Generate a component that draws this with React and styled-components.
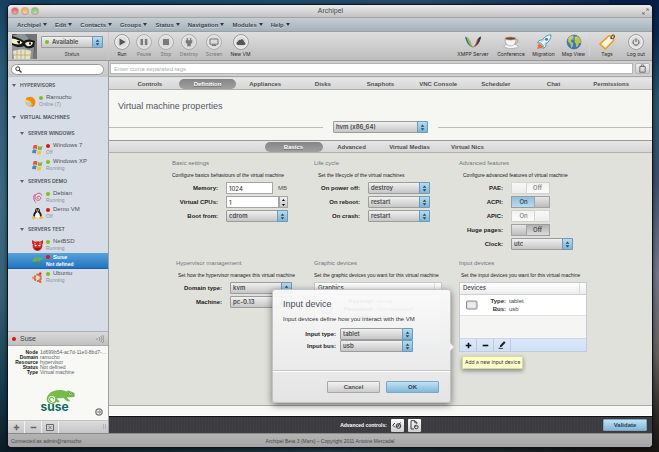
import React from "react";
import styled, { createGlobalStyle, css } from "styled-components";

const sans = `"Liberation Sans", Arial, sans-serif`;
const small = `Inter, "Liberation Sans", sans-serif`;

const GlobalStyle = createGlobalStyle`
  *, *::before, *::after { box-sizing: border-box; }
  html, body, #root { height: 100%; }
  body { margin: 0; overflow: hidden; font-family: ${sans}; font-size: 6px; line-height: 8px; color: #333; }
  button, input, select { font: inherit; color: inherit; margin: 0; padding: 0; border: 0; background: none; }
  button { cursor: pointer; }
  h1, h2, h3, p, dl, dd, dt, ul { margin: 0; padding: 0; font: inherit; }
  ul { list-style: none; }
  svg { display: block; flex: none; }
`;

const Desktop = styled.div`
  height: 100vh;
  padding: 5px 7px 5px 8px;
  background:
    linear-gradient(180deg, #071f48 0%, #0b2a50 8%, #2a566c 22%, #3d4f6c 40%, #74778a 60%, #67625f 78%, #2e2925 92%, #181512 100%) right / 50px 100% no-repeat,
    linear-gradient(180deg, #16405f 0%, #2a5a76 15%, #3a6a80 45%, #356073 65%, #183c50 85%, #0c1c26 100%) left / 50px 100% no-repeat,
    linear-gradient(90deg, #16405f, #1e4a6a 40%, #274a66 65%, #071f48) top / 100% 20px no-repeat,
    linear-gradient(90deg, #0c1c26, #1f3a44 50%, #181512);
`;

const Window = styled.div`
  height: 100%;
  display: flex;
  flex-direction: column;
  border-radius: 4px;
  overflow: hidden;
  background: #e3e3df;
  box-shadow: 0 0 0 1px #0c1420, 0 1px 4px 1px rgba(0, 0, 0, 0.6);
`;

const TitleBar = styled.header`
  flex: none;
  height: 13px;
  display: grid;
  grid-template-columns: 1fr auto 1fr;
  align-items: center;
  padding: 0 3px 0 4px;
  background: linear-gradient(#ececec, #c2c2c2);
  border-bottom: 1px solid #a5a5a5;
  color: #4a4a4a;
  font-size: 7px;
`;

const Lights = styled.div`
  display: flex;
  gap: 4px;
`;

const Light = styled.button`
  width: 6px;
  height: 6px;
  border-radius: 50%;
  background: radial-gradient(circle at 50% 75%, #fff6 10%, ${(p) => p.$color} 70%);
  background-color: ${(p) => p.$color};
  box-shadow: 0 0 0 1px rgba(90, 60, 50, 0.25);
`;

const Expand = styled.button`
  justify-self: end;
`;

const MenuBar = styled.nav`
  flex: none;
  height: 14px;
  display: flex;
  align-items: center;
  gap: 8px;
  padding: 0 9px;
  background: linear-gradient(#c3cdd4, #a6b2ba);
  border-bottom: 1px solid #97a1a8;
`;

const MenuButton = styled.button`
  display: flex;
  align-items: center;
  gap: 2px;
  font-weight: bold;
  color: #3e474d;
  text-shadow: 0 1px 0 rgba(255, 255, 255, 0.5);
`;

const Caret = styled.span`
  border: 2px solid transparent;
  border-top: 3px solid #30383d;
  border-bottom: 0;
`;

const Toolbar = styled.div`
  flex: none;
  height: 29px;
  display: flex;
  align-items: stretch;
  background: linear-gradient(#dedede, #bdbdbd);
  border-bottom: 1px solid #9a9a9a;
`;

const Identity = styled.div`
  width: 101px;
  display: flex;
  gap: 4px;
  padding: 2px 5px 0 4px;
  border-right: 1px solid #c9c9c9;
`;

const StatusBox = styled.div`
  flex: 1;
  display: flex;
  flex-direction: column;
  padding-top: 2px;
  gap: 3px;
  text-align: center;
  font: 5px/6px ${small};
  color: #444;
`;

const Tools = styled.div`
  display: flex;
  padding: 2px 0 0 2px;
`;

const RightTools = styled(Tools)`
  margin-left: auto;
  padding-right: 2px;
`;

const Tool = styled.button`
  width: ${(p) => p.$w || 22}px;
  display: flex;
  flex-direction: column;
  align-items: center;
  justify-content: flex-start;
  gap: 1px;
  font: 5px/6px ${small};
  white-space: nowrap;
  color: ${(p) => (p.disabled ? "#777" : "#2b2b2b")};
  svg { opacity: ${(p) => (p.disabled ? 0.7 : 1)}; }
`;

const ToolRule = styled.span`
  width: 1px;
  margin: 0 2px 4px 0;
  background: #d4d4d4;
`;

const Body = styled.div`
  flex: 1;
  min-height: 0;
  display: flex;
`;

const Sidebar = styled.aside`
  flex: none;
  width: 101px;
  display: flex;
  flex-direction: column;
  border-right: 1px solid #9f9fa3;
  background: #d7dde6;
`;

const SearchRow = styled.div`
  flex: none;
  height: 16px;
  padding: 3px 4px 0 3px;
  background: linear-gradient(#d6d6d6, #c6c6c6);
`;

const SearchField = styled.label`
  display: flex;
  align-items: center;
  height: 11px;
  padding-left: 3px;
  border: 1px solid #9b9b9b;
  border-radius: 6px;
  background: #fff;
  input { flex: 1; min-width: 0; outline: 0; }
`;

const Tree = styled.ul`
  flex: 1;
  min-height: 0;
  overflow: hidden;
  color: #4b5158;
`;

const Group = styled.li`
  height: 16px;
  display: flex;
  align-items: center;
  gap: 4px;
  padding-left: ${(p) => (p.$nested ? 12 : 4)}px;
  font: 600 5px/16px ${small};
  color: #4a5057;
`;

const Contact = styled.li`
  height: 16px;
  display: flex;
  align-items: center;
  gap: 3px;
  padding-left: ${(p) => (p.$nested ? 24 : 17)}px;
  ${(p) =>
    p.$selected &&
    css`
      background: linear-gradient(#55a2dc, #2273c0);
      border-bottom: 1px solid #1d5f9f;
      color: #fff;
      font-weight: bold;
    `}
`;

const ContactText = styled.div`
  line-height: 7px;
  small {
    display: block;
    font-size: 5px;
    line-height: 7px;
    color: ${(p) => (p.$selected ? "#fff" : "#8a9098")};
  }
`;

const ContactName = styled.span`
  display: flex;
  align-items: center;
  gap: 3px;
`;

const Dot = styled.i`
  flex: none;
  width: 4px;
  height: 4px;
  border-radius: 50%;
  background: ${(p) => (p.$on ? "#7cc116" : "#e01212")};
`;

const Triangle = styled.span`
  border: 2px solid transparent;
  border-top: 3px solid #5f656c;
  border-bottom: 0;
`;

const DetailHead = styled.div`
  flex: none;
  height: 15px;
  display: flex;
  align-items: center;
  gap: 4px;
  padding: 0 4px;
  font-size: 7px;
  color: #444;
  background: linear-gradient(#dadada, #c0c0c0);
  border-top: 1px solid #b0b0b0;
  border-bottom: 1px solid #aaa;
  svg { margin-left: auto; }
`;

const Detail = styled.section`
  flex: none;
  height: 74px;
  display: flex;
  flex-direction: column;
  justify-content: space-between;
  padding: 4px 5px 4px 4px;
  background: #f8f8f5;
`;

const Facts = styled.dl`
  display: grid;
  grid-template-columns: 26px 1fr;
  column-gap: 2px;
  font-size: 5px;
  line-height: 5px;
  white-space: nowrap;
  dt { text-align: right; font-weight: bold; color: #222; }
  dd { color: #5f6369; }
`;

const LogoRow = styled.div`
  display: grid;
  grid-template-columns: 1fr auto 1fr;
  align-items: end;
  button { justify-self: end; }
`;

const SideActions = styled.div`
  flex: none;
  height: 13px;
  display: flex;
  background: linear-gradient(#dcdcdc, #c6c6c6);
  border-top: 1px solid #c4c4c4;
`;

const SideAction = styled.button`
  width: 17px;
  display: grid;
  place-items: center;
  border-right: 1px solid #f0f0f0;
`;

const Grip = styled.span`
  margin: 3px 2px 0 auto;
  width: 3px;
  height: 5px;
  border: 1px solid #b3b3b3;
  border-width: 0 1px;
`;

const Main = styled.main`
  flex: 1;
  min-width: 0;
  display: flex;
  flex-direction: column;
`;

const TagRow = styled.div`
  flex: none;
  height: 16px;
  display: flex;
  gap: 2px;
  padding: 2px 2px 2px 1px;
  background: #cfcfcf;
  border-bottom: 1px solid #a8a8a8;
  input {
    flex: 1;
    padding: 0 3px;
    background: #fff;
    border: 1px solid #b5b5b5;
    outline: 0;
  }
  input::placeholder { color: #a9b0b7; opacity: 1; }
`;

const TagButton = styled.button`
  width: 15px;
  display: grid;
  place-items: center;
  border: 1px solid #b5b5b5;
  border-radius: 2px;
  background: linear-gradient(#f2f2f2, #cbcbcb);
`;

const Tabs = styled.nav`
  flex: none;
  height: 13px;
  display: grid;
  grid-template-columns: ${(p) => (p.$centered ? "repeat(4, 58px)" : "repeat(9, 1fr)")};
  justify-content: center;
  align-items: center;
  padding: 0 12px;
  background: linear-gradient(#e6e6e6, #d6d6d6);
  border-top: 1px solid ${(p) => (p.$centered ? "#999" : "#ddd")};
  border-bottom: 1px solid #b0b0b0;
`;

const Tab = styled.button`
  height: 10px;
  border-radius: 5px;
  font-weight: bold;
  white-space: nowrap;
  color: #505050;
  ${(p) =>
    p.$active &&
    css`
      background: linear-gradient(#858585, #a0a0a0);
      color: #fff;
      text-shadow: 0 1px 0 #666;
    `}
`;

const PageHead = styled.section`
  flex: none;
  height: 50px;
  padding: 10px 9px 0;
  background: #f6f6f3;
  h1 { font-size: 9px; line-height: 12px; color: #4e5862; }
`;

const TypeRow = styled.div`
  display: flex;
  align-items: center;
  gap: 10px;
  margin: 9px -9px 0;
  &::before, &::after { content: ""; flex: 1; height: 1px; background: #bdbdbb; }
`;

const SelectBox = styled.span`
  position: relative;
  display: block;
  width: ${(p) => (p.$w ? `${p.$w}px` : "100%")};
  height: 12px;
  select {
    appearance: none;
    display: block;
    width: 100%;
    height: 100%;
    padding: 0 12px 0 ${(p) => (p.$dot ? 10 : 2)}px;
    font: 600 6px/8px ${small};
    color: #4a4a4a;
    border: 1px solid #9c9c9c;
    border-radius: 1px;
    background: linear-gradient(#f0f0f0, #c6c6c6);
    outline: 0;
  }
`;

const Cap = styled.span`
  position: absolute;
  top: 0;
  right: 0;
  width: 11px;
  height: 100%;
  display: grid;
  place-items: center;
  border: 1px solid #6f99b5;
  border-radius: 0 1px 1px 0;
  background: linear-gradient(#b5dcf1, #7fb5d6);
  pointer-events: none;
`;

const OverDot = styled(Dot)`
  position: absolute;
  left: 4px;
  top: 4px;
`;

const Workspace = styled.div`
  flex: 1;
  display: grid;
  grid-template-columns: 142fr 145fr 130fr;
  grid-template-rows: 100px auto;
  align-content: start;
  padding: 6px 63px 0;
  background: #e1e1dc;
`;

const Section = styled.section`
  position: relative;
  min-width: 0;
  padding-left: ${(p) => p.$indent || 0}px;
  h2 { color: #70757a; line-height: 8px; white-space: nowrap; }
  > p {
    margin: 4px 0 3px ${(p) => p.$inset || 0}px;
    font: 5px/8px ${sans};
    color: #222;
    white-space: nowrap;
  }
`;

const Fields = styled.div`
  display: grid;
  grid-template-columns: ${(p) => p.$label || 46}px 62px auto;
  grid-auto-rows: 12px;
  gap: 2px 8px;
  align-items: center;
  justify-content: start;
`;

const Label = styled.label`
  grid-column: 1;
  justify-self: end;
  font-weight: bold;
  color: #222;
  white-space: nowrap;
`;

const WithUnit = styled.div`
  display: flex;
  align-items: center;
  gap: 5px;
  color: #555;
  input { width: 47px; }
`;

const TextInput = styled.input`
  && {
    height: 12px;
    padding: 0 2px;
    font: 500 6px/8px ${small};
    color: #444;
    background: #fff;
    border: 1px solid #a5a5a5;
    outline: 0;
  }
`;

const Stepper = styled.div`
  display: flex;
  input { flex: 1; min-width: 0; }
`;

const StepButtons = styled.div`
  width: 9px;
  display: grid;
  border: 1px solid #a5a5a5;
  background: linear-gradient(#f0f0f0, #c4c4c4);
  button { display: grid; place-items: center; }
`;

const Switch = styled.label`
  position: relative;
  display: flex;
  flex-direction: ${(p) => (p.$on ? "row-reverse" : "row")};
  width: 39px;
  height: 12px;
  border: 1px solid ${(p) => (p.$locked ? "#cfcfcd" : "#9c9c9c")};
  background: ${(p) =>
    p.$locked ? "linear-gradient(#f2f2f0, #fbfbfb)" : p.$on ? "linear-gradient(#8fc0dd, #b5dcf1)" : "linear-gradient(#b0b0b0, #dcdcdc)"};
  color: ${(p) => (p.$locked ? "#777" : "#333")};
  input { position: absolute; inset: 0; margin: 0; opacity: 0; }
  span { flex: 1; text-align: center; font: 500 6px/10px ${small}; }
  &::before {
    content: "";
    width: 14px;
    background: ${(p) => (p.$locked ? "linear-gradient(#f8f8f8, #ececea)" : "linear-gradient(#e6e6e6, #bcbcbc)")};
    box-shadow: 0 0 0 1px ${(p) => (p.$locked ? "#d6d6d4" : "#a3a3a3")};
  }
`;

const ListBox = styled.div`
  width: 128px;
  height: 70px;
  margin-top: 1px;
  display: flex;
  flex-direction: column;
  border: 1px solid #c3cbd8;
  background: #f5f5f4;
`;

const ListTable = styled.table`
  width: 100%;
  border-collapse: collapse;
  th {
    height: 11px;
    padding: 0 3px;
    text-align: left;
    font: 500 6px/8px ${small};
    color: #444;
    background: linear-gradient(#fff, #ececec);
    border-bottom: 1px solid #cfcfcf;
  }
  th + th { width: 7px; padding: 0; border-left: 1px solid #ddd; }
  td { height: 21px; padding: 0 5px; background: #fff; border-bottom: 1px solid #e3e3e3; vertical-align: top; }
`;

const DeviceCell = styled.div`
  display: flex;
  align-items: center;
  gap: 8px;
  padding-top: 2px;
`;

const DeviceFacts = styled.dl`
  display: grid;
  grid-template-columns: ${(p) => p.$keys}px auto;
  column-gap: 3px;
  line-height: 8px;
  dt { text-align: right; font-weight: bold; color: #333; }
  dd { color: #444; }
`;

const ListActions = styled.div`
  height: 13px;
  margin-top: auto;
  display: flex;
  background: linear-gradient(#dbe8f8, #cfe1f6);
  border-top: 1px solid #cbd8ea;
`;

const ListAction = styled.button`
  width: 17px;
  display: grid;
  place-items: center;
  border-right: 1px solid #bccbe0;
`;

const Tooltip = styled.div`
  position: absolute;
  top: 97px;
  left: 3px;
  padding: 1px 2px;
  font: 5px/9px ${small};
  color: #333;
  white-space: nowrap;
  background: #ffffc9;
  border: 1px solid #d9d99c;
  box-shadow: 0 2px 4px rgba(0, 0, 0, 0.4);
`;

const Popover = styled.form`
  position: absolute;
  z-index: 2;
  top: 30px;
  right: calc(100% + 8px);
  width: 179px;
  border: 1px solid #c2c2c2;
  border-radius: 3px;
  background: linear-gradient(rgba(250, 250, 250, 0.93), rgba(228, 228, 228, 0.96));
  box-shadow: 0 2px 7px rgba(0, 0, 0, 0.5);
  &::after {
    content: "";
    position: absolute;
    left: 100%;
    top: 53px;
    border: 4px solid transparent;
    border-left-color: #f2f2f2;
    border-right: 0;
  }
  h3 { font-size: 9px; line-height: 12px; color: #4b515b; }
`;

const PopoverBody = styled.div`
  padding: 8px 10px 18px;
  p { margin: 5px 0; white-space: nowrap; color: #333; }
`;

const PopoverFields = styled.div`
  display: grid;
  grid-template-columns: 53px 73px;
  gap: 0 4px;
  align-items: center;
`;

const PopoverButtons = styled.div`
  display: flex;
  justify-content: flex-end;
  gap: 6px;
  padding: 10px 11px 9px;
  border-top: 1px solid #c6c6c6;
  box-shadow: inset 0 1px 0 #fff;
`;

const PushButton = styled.button`
  width: ${(p) => p.$w || 53}px;
  height: 12px;
  font-weight: bold;
  color: ${(p) => (p.$primary ? "#2c4252" : "#505050")};
  border: 1px solid ${(p) => (p.$primary ? "#7fa6bf" : "#a8a8a8")};
  border-radius: 1px;
  background: ${(p) => (p.$primary ? "linear-gradient(#bfe2f5, #82b8d8)" : "linear-gradient(#f2f2f2, #cccccc)")};
`;

const Spacer = styled.div`
  flex: none;
  height: 11px;
  background: #f8f8f5;
  border-top: 1px solid #aaa;
  border-bottom: 1px solid #fff;
`;

const Commands = styled.div`
  flex: none;
  height: 17px;
  display: grid;
  grid-template-columns: 1fr auto 1fr;
  align-items: center;
  padding: 0 5px;
  color: #fff;
  font: bold 5px/8px ${sans};
  background: repeating-linear-gradient(90deg, #ffffff06 0 1px, transparent 1px 3px), #3b3b40;
  border-top: 1px solid #111;
  > ${PushButton} { grid-column: 3; justify-self: end; font: bold 6px/8px ${sans}; }
`;

const Advanced = styled.div`
  grid-column: 2;
  display: flex;
  align-items: center;
  gap: 4px;
`;

const IconButton = styled.button`
  width: 13px;
  height: 13px;
  display: grid;
  place-items: center;
  border-radius: 1px;
  background: linear-gradient(#fafafa, #d0d0d0);
`;

const Footer = styled.footer`
  flex: none;
  height: 14px;
  display: grid;
  grid-template-columns: 1fr auto 1fr;
  align-items: center;
  padding: 0 3px;
  font-size: 5px;
  color: #4a4a4a;
  background: linear-gradient(#b4b4b4, #a4a4a4);
  border-top: 1px solid #8a8a8a;
`;

function Drop({ id, label, value, width, dot }) {
  return (
    <SelectBox $w={width} $dot={dot}>
      <select id={id} aria-label={label} defaultValue={value}>
        <option>{value}</option>
      </select>
      {dot && <OverDot $on />}
      <Cap>
        <svg width="5" height="7" viewBox="0 0 5 7" fill="#24495f">
          <path d="M2.5 0.4 4.3 2.7H.7zM2.5 6.6 4.3 4.3H.7z" />
        </svg>
      </Cap>
    </SelectBox>
  );
}

const Avatar = () => (
  <svg width="25" height="25" viewBox="0 0 25 25">
    <rect width="25" height="25" fill="#5d5d5e" />
    <path d="M0 2 6 0h7l5 6 4 7-1 12H0z" fill="#8e959a" />
    <path d="M13 0h12v25h-4l2-11-4-8z" fill="#737475" />
    <path d="M0 2c5 1 9 3 12 5 3-2 7-2 11 0l-1 6c-4 2-8 2-10-1-4 2-8 1-12-1z" fill="#15171a" />
    <path d="M0 4.500c4 .5 8 2 10.500 4C9 11 4 11 0 9z" fill="#f5f1c7" />
    <path d="M13 9c3-1.500 6-1.500 8-.5-.5 3.500-5 5-7 2.500z" fill="#f5f1c7" />
    <path d="M5 7h3v2.500H6zM17 8.500h2v2h-2z" fill="#111" />
    <path d="M1 17c6-2 13-2 18 0l-1 8H2z" fill="#e9e3bd" />
    <path d="M1 21h17M5 16v9M9 16v9M13 16v9" stroke="#a8a27e" strokeWidth=".7" />
  </svg>
);

const roundGlyphs = {
  Run: <path d="M5.5 4.5v7l6.2-3.5z" />,
  Pause: <path d="M4.6 5h2.4v6H4.6zM8.9 5h2.4v6H8.9z" />,
  Stop: <path d="M5 5h6v6H5z" />,
  Destroy: <path d="M5.7 4h1.2v2.3h2.2V4h1.2v2.3h1v2.2L9.7 10v2.2H6.3V10L4.7 8.500V6.300h1z" />,
  Screen: (
    <>
      <path d="M4 5h8v5.200H4z" fill="none" stroke="#555" />
      <path d="M6.500 10.500h3l.8 1.500H5.700z" />
    </>
  ),
  "New VM": <path d="M4.800 11a1.800 1.800 0 0 1 .2-3.500 2 2 0 0 1 2.300-1.600 2 2 0 0 1 3.500 1.300l1 1.200A1.500 1.500 0 0 1 11.500 11z" />,
  "Log out": (
    <>
      <path d="M6.300 5.700a3 3 0 1 0 3.400 0" fill="none" stroke="#555" strokeWidth="1" />
      <path d="M7.500 4.500h1V8h-1z" />
    </>
  ),
};

const RoundIcon = ({ name }) => (
  <svg width="16" height="16" viewBox="0 0 16 16" fill="#555">
    <circle cx="8" cy="8" r="7.400" fill="#ececec" stroke="#8d8d8d" strokeWidth=".9" />
    <circle cx="8" cy="8" r="6.200" fill="#dedede" stroke="#fff" strokeWidth=".6" />
    {roundGlyphs[name]}
  </svg>
);

const colorGlyphs = {
  "XMPP Server": (
    <>
      <path d="M0 2.500c2 1 4 2 4.500 4.500.6 3 2 5 4 6.500C4 13 1 8 0 2.500z" fill="#2b6e8d" />
      <path d="M1.500 3c3 1.500 4 3.500 4.500 6 .4 2 1 3.500 2.500 4.500-3-1-6-5-7-10.500z" fill="#8fbe3f" />
      <path d="M16 2.500c-2 1-4 2-4.500 4.500-.6 3-2 5-4 6.500C12 13 15 8 16 2.500z" fill="#d9532c" />
      <path d="M16 2.500c-1.500.600-2.500 1.400-3 3 0 3-2 6-3.500 7.200C13 11 15.500 7 16 2.500z" fill="#243c60" />
    </>
  ),
  Conference: (
    <>
      <ellipse cx="8" cy="12.300" rx="7" ry="2.200" fill="#fafafa" stroke="#999" strokeWidth=".6" />
      <path d="M2 4.500c0 5 2 7.500 5.500 7.500S13 9.500 13 4.500z" fill="#f4f4f4" stroke="#8e8e8e" strokeWidth=".6" />
      <path d="M12.800 5.500c3-.5 3 3.500-.8 3.700" fill="none" stroke="#9a9a9a" />
      <ellipse cx="7.500" cy="4.500" rx="5.500" ry="1.700" fill="#7b4824" stroke="#ddd" strokeWidth=".6" />
    </>
  ),
  Migration: (
    <>
      <path d="M3.500 9.500 1 12l1 .2-.8 3 3.300-1.200.3 1L7 12.500z" fill="#ef6e35" />
      <path d="M15 .8c-4 .2-6.500 2-8.500 5L3 6.500 1.500 9l3-.2 2.700 2.700-.2 3 2.500-1.700.7-3.300c3-2 4.600-4.700 4.800-8.700z" fill="#eaf6fb" stroke="#3b87aa" strokeWidth=".8" />
      <circle cx="10.500" cy="5.300" r="1.500" fill="#3b87aa" />
      <path d="m5.500 8 3-3M8 10.500l3-2.500" stroke="#7ab5cf" strokeWidth=".7" />
    </>
  ),
  "Map View": (
    <>
      <circle cx="8" cy="8" r="7" fill="#3b77c3" stroke="#2b5a9a" strokeWidth=".5" />
      <path d="M2 4.500C3.500 2 6 1.200 7.500 1.500L7.200 4 5.500 5.500 5 7.500l2.200 1.700-.5 3L5.200 14 4.500 10 2.200 8zM9 3l2.500-1 3 3 .3 4-2 .3L12 12.500l-1.700.5-.6-3.700-1.400-1.500.7-2z" fill="#b8c640" />
      <ellipse cx="7" cy="4" rx="4" ry="2" fill="#fff" opacity=".2" />
    </>
  ),
  Tags: (
    <>
      <path d="M9.500 2h5v4.800L6.300 15 1 10z" fill="#fff6e2" stroke="#f09a1c" strokeWidth="1.600" strokeLinejoin="round" />
      <circle cx="12.200" cy="4.300" r="1" fill="#555" />
      <path d="M12 4c0-4 4.500-4 3.500-1-.5 1.500-2 2-3 1.500" fill="none" stroke="#333" strokeWidth=".8" />
    </>
  ),
};

const ColorIcon = ({ name }) => (
  <svg width="16" height="16" viewBox="0 0 16 16">
    {colorGlyphs[name]}
  </svg>
);

const osGlyphs = {
  fire: (
    <>
      <circle cx="5.500" cy="5.700" r="5" fill="#f8a71a" />
      <path d="M1 2c4-2.500 8-.5 9 3 .8 3.500-1 6-3.500 6 1.500-2 .5-4-1-5S1.500 5 1 2z" fill="#ef8a10" />
      <path d="M.5 4C3 3.500 6 5 6.500 8c-2 1.500-5 .5-6-4z" fill="#fddc3a" />
      <circle cx="3.800" cy="7.800" r="2.200" fill="#a9cff0" />
    </>
  ),
  windows: (
    <>
      <path d="M1.500 1.500c1.500-.8 3-.6 4 .1L4.700 5.200c-1.200-.7-2.500-.8-4-.1z" fill="#e8552b" />
      <path d="M6.300 2c1.300.800 2.700.800 4.200.1L9.700 5.700c-1.500.7-3 .6-4.200-.1z" fill="#7db93a" />
      <path d="M.6 6c1.500-.7 2.800-.6 4 .1L3.800 9.600c-1.200-.7-2.500-.8-3.800-.2z" fill="#3f87cf" />
      <path d="M5.400 6.500c1.200.8 2.600.800 4.100.2l-.8 3.500c-1.500.6-2.900.5-4.100-.2z" fill="#f6c52d" />
    </>
  ),
  debian: (
    <path d="M6.500 6.500c-1.500.3-2-1.300-.8-2 1.500-.8 3.300.4 2.900 2.100-.6 2.200-4 2.300-5.200.2C2 4 4.500 1 7 1.200c1.500.1 2.500 1 2.700 2.300M3.400 2C1 4 1 7 3.800 10.500" fill="none" stroke="#d0476e" strokeWidth=".9" />
  ),
  tux: (
    <>
      <path d="M5.500 0C3.200 0 3 2 3 3.500 1.500 5 .8 7 1.500 9.500h8C10.200 7 9.500 5 8 3.500 8 2 7.800 0 5.500 0z" fill="#222" />
      <path d="M5.500 4C3.500 5 2.800 7 3 9.800h5C8.200 7 7.500 5 5.500 4z" fill="#fff" />
      <path d="M4.200 2.700h2.600L5.500 4zM0 9.300l2-1.500 2 2.500-1 .7-3-.5zM11 9.300 9 7.800l-2 2.500 1 .7 3-.5z" fill="#f3b81f" />
      <path d="M4.200 1.500h1v1h-1zM5.900 1.500h1v1h-1z" fill="#fff" />
    </>
  ),
  netbsd: (
    <>
      <path d="M0 0 3 1.800c2-.8 3.500-.8 5 0L11 0c.2 2.500 0 3.500-.8 4.500C11 8 8.500 11 5.500 11S0 8 .8 4.500C0 3.500-.2 2 0 0z" fill="#d3261f" />
      <path d="M1.500 2.500 4 3.200 3 4.500zM9.500 2.500 7 3.200l1 1.300z" fill="#f39a86" />
      <path d="M2.500 4.500 5 5.200 4 6.400 2.600 6zM8.500 4.500 6 5.200l1 1.200L8.400 6z" fill="#fff" />
      <path d="M2.800 8c1.700 1 3.700 1 5.400 0-.8 2.300-4.600 2.300-5.400 0z" fill="#4a0808" />
    </>
  ),
  suse: (
    <>
      <path d="M.5 6.500C0 3.500 3 2.200 5 2.500 7 2.200 9 2.200 11 3.800c0 1.300-1.500 1.200-2.800 1.200L7 6.800 5.500 5.500l-2 1.200z" fill="#66b04f" />
      <path d="M1 8.500h9" stroke="#3d8a6a" strokeWidth="1.500" strokeDasharray="1.800 .500" />
    </>
  ),
  ubuntu: (
    <>
      <circle cx="5.700" cy="5.800" r="3.200" fill="none" stroke="#e06a33" strokeWidth="2" strokeDasharray="5.700 1" />
      <circle cx="1.200" cy="5.800" r="1.200" fill="#ee9a3a" />
      <circle cx="8.300" cy="1.500" r="1.200" fill="#cf3b2c" />
      <circle cx="8.300" cy="10" r="1.200" fill="#e06a33" />
    </>
  ),
};

const OsIcon = ({ name }) => (
  <svg width="11" height="11" viewBox="0 0 11 11">
    {osGlyphs[name]}
  </svg>
);

const SuseLogo = () => (
  <svg width="34" height="16" viewBox="0 0 34 16" aria-hidden="true">
    <path d="M7 13C4 10 7 4 12 2.200c5-1.900 10-1.500 14 .3l1-1.300 6 2.500c1 1.500 1 3 .3 4-2 1-5 .5-7 .5-.2 1 1 2 2.500 2.800l-.5 1.500c-2.500 0-4.500-1.500-5.500-3.800-2 .7-4.500.700-6.500.2 0 1.500 1 2.500 2.500 3l-1 1.500c-2 0-4-1-4.500-2.500" fill="#77bb4b" />
    <circle cx="10.800" cy="10.300" r="4.200" fill="#f8f8f5" stroke="#77bb4b" strokeWidth="1.600" />
    <path d="M10.800 12.300a2 2 0 1 1 1.800-2" fill="none" stroke="#77bb4b" strokeWidth="1.200" />
    <circle cx="29.500" cy="4.700" r="1.500" fill="#f8f8f5" stroke="#3f8445" strokeWidth=".5" />
    <circle cx="29.700" cy="4.700" r=".6" fill="#245c34" />
  </svg>
);

const SuseMark = styled.figure`
  margin: 0 0 5px;
  display: flex;
  flex-direction: column;
  align-items: flex-start;
  figcaption {
    margin-top: -3px;
    font: 700 12px/9px Inter, sans-serif;
    color: #0d6c5f;
  }
`;

const Plus = ({ color = "#444" }) => (
  <svg width="7" height="7" viewBox="0 0 7 7" fill={color}>
    <path d="M2.700.700h1.600v2h2v1.600h-2v2H2.700v-2h-2V2.700h2z" />
  </svg>
);

const Minus = ({ color = "#444" }) => (
  <svg width="7" height="7" viewBox="0 0 7 7" fill={color}>
    <path d="M.7 2.700h5.600v1.600H.7z" />
  </svg>
);

const menus = ["Archipel", "Edit", "Contacts", "Groups", "Status", "Navigation", "Modules", "Help"];

const vmTools = [
  ["Run", false, 22],
  ["Pause", true, 22],
  ["Stop", true, 22],
  ["Destroy", true, 24],
  ["Screen", true, 26],
  ["New VM", false, 27],
];

const appTools = [
  ["XMPP Server", 40],
  ["Conference", 36],
  ["Migration", 29],
  ["Map View", 31],
];

const tree = [
  { group: "HYPERVISORS" },
  { name: "Ramucho", status: "Online (7)", os: "fire", on: true, top: true },
  { group: "VIRTUAL MACHINES" },
  { group: "SERVER WINDOWS", nested: true },
  { name: "Windows 7", status: "Off", os: "windows" },
  { name: "Windows XP", status: "Running", os: "windows", on: true },
  { group: "SERVERS DEMO", nested: true },
  { name: "Debian", status: "Running", os: "debian", on: true },
  { name: "Demo VM", status: "Off", os: "tux" },
  { group: "SERVERS TEST", nested: true },
  { name: "NetBSD", status: "Running", os: "netbsd", on: true },
  { name: "Suse", status: "Not defined", os: "suse", selected: true },
  { name: "Ubuntu", status: "Running", os: "ubuntu", on: true },
];

const facts = [
  ["Node", "1d699b54-ac7d-11e0-8bd7-…"],
  ["Domain", "ramucho"],
  ["Resource", "hypervisor"],
  ["Status", "Not defined"],
  ["Type", "Virtual machine"],
];

const modules = ["Controls", "Definition", "Appliances", "Disks", "Snaphots", "VNC Console", "Scheduler", "Chat", "Permissions"];
const pages = ["Basics", "Advanced", "Virtual Medias", "Virtual Nics"];

const switches = [
  ["PAE", false, true],
  ["ACPI", true, false],
  ["APIC", true, true],
  ["Huge pages", false, false],
];

function SelectField({ id, label, value }) {
  return (
    <>
      <Label htmlFor={id}>{label}:</Label>
      <Drop id={id} value={value} />
    </>
  );
}

function SidePanel() {
  return (
    <Sidebar>
      <SearchRow>
        <SearchField>
          <svg width="7" height="7" viewBox="0 0 7 7" fill="none" stroke="#333">
            <circle cx="2.800" cy="2.800" r="2" />
            <path d="m4.300 4.300 2.200 2.200" strokeWidth="1.300" />
          </svg>
          <input type="search" aria-label="Search contacts" />
        </SearchField>
      </SearchRow>
      <Tree>
        {tree.map((t) =>
          t.group ? (
            <Group key={t.group} $nested={t.nested}>
              <Triangle />
              {t.group}
            </Group>
          ) : (
            <Contact key={t.name} $nested={!t.top} $selected={t.selected}>
              <OsIcon name={t.os} />
              <ContactText $selected={t.selected}>
                <ContactName>
                  <Dot $on={t.on} />
                  {t.name}
                </ContactName>
                <small>{t.status}</small>
              </ContactText>
            </Contact>
          )
        )}
      </Tree>
      <DetailHead>
        <Dot />
        Suse
        <svg width="8" height="8" viewBox="0 0 8 8" fill="none" stroke="#888" strokeWidth=".8">
          <path d="M1 3v2M3 2c1 1 1 3 0 4M4.700 1c1.700 1.700 1.700 4.300 0 6M6.300 0c2.200 2.400 2.200 5.600 0 8" />
        </svg>
      </DetailHead>
      <Detail>
        <Facts>
          {facts.map(([k, v]) => (
            <React.Fragment key={k}>
              <dt>{k}</dt>
              <dd>{v}</dd>
            </React.Fragment>
          ))}
        </Facts>
        <LogoRow>
          <span />
          <SuseMark>
            <SuseLogo />
            <figcaption>suse</figcaption>
          </SuseMark>
          <button aria-label="Next">
            <svg width="8" height="8" viewBox="0 0 8 8">
              <circle cx="4" cy="4" r="3.200" fill="#eee" stroke="#777" strokeWidth="1.200" />
              <path d="M2 4h3.500M4 2.500 5.700 4 4 5.500" fill="none" stroke="#777" strokeWidth=".9" />
            </svg>
          </button>
        </LogoRow>
      </Detail>
      <SideActions>
        <SideAction aria-label="Add"><Plus color="#666" /></SideAction>
        <SideAction aria-label="Remove"><Minus color="#666" /></SideAction>
        <SideAction aria-label="Hide details">
          <svg width="8" height="7" viewBox="0 0 8 7" fill="none" stroke="#666">
            <path d="M.5.500h7v6h-7z" />
            <path d="m2.500 2 3 3m0-3-3 3" strokeWidth=".8" />
          </svg>
        </SideAction>
        <Grip />
      </SideActions>
    </Sidebar>
  );
}

function InputPopover() {
  return (
    <Popover onSubmit={(e) => e.preventDefault()}>
      <PopoverBody>
        <h3>Input device</h3>
        <p>Input devices define how you interact with the VM</p>
        <PopoverFields>
          <SelectField id="input-type" label="Input type" value="tablet" />
          <SelectField id="input-bus" label="Input bus" value="usb" />
        </PopoverFields>
      </PopoverBody>
      <PopoverButtons>
        <PushButton type="button">Cancel</PushButton>
        <PushButton $primary>OK</PushButton>
      </PopoverButtons>
    </Popover>
  );
}

function DeviceList({ title, rows, keys, children }) {
  return (
    <ListBox>
      <ListTable>
        <thead>
          <tr>
            <th scope="col">{title}</th>
            <th aria-label="Options" />
          </tr>
        </thead>
        <tbody>
          <tr>
            <td colSpan={2}>
              <DeviceCell>
                <svg width="13" height="10" viewBox="0 0 13 10">
                  <rect x="1.500" y="1" width="10.500" height="8" rx="1" fill="#dcdcdc" stroke="#8d8d8d" />
                  <path d="M3 2.500h7.500v5H3z" fill="#ededed" />
                </svg>
                <DeviceFacts $keys={keys}>
                  {rows.map(([k, v]) => (
                    <React.Fragment key={k}>
                      <dt>{k}:</dt>
                      <dd>{v}</dd>
                    </React.Fragment>
                  ))}
                </DeviceFacts>
              </DeviceCell>
            </td>
          </tr>
        </tbody>
      </ListTable>
      <ListActions>{children}</ListActions>
    </ListBox>
  );
}

const StatusSelect = styled.div`
  text-align: left;
`;

export default function App() {
  return (
    <Desktop>
      <GlobalStyle />
      <Window>
        <TitleBar>
          <Lights>
            <Light $color="#ee5a55" aria-label="Close" />
            <Light $color="#f3b04a" aria-label="Minimize" />
            <Light $color="#86c66b" aria-label="Zoom" />
          </Lights>
          <span>Archipel</span>
          <Expand aria-label="Full screen">
            <svg width="7" height="7" viewBox="0 0 7 7" fill="#777" stroke="#777" strokeWidth=".8">
              <path d="M4.200 2.800 6 1M2.800 4.200 1 6" />
              <path d="M3.800.400h2.800v2.800zM.4 3.800v2.800h2.800z" stroke="none" />
            </svg>
          </Expand>
        </TitleBar>
        <MenuBar>
          {menus.map((m) => (
            <MenuButton key={m}>
              {m}
              <Caret />
            </MenuButton>
          ))}
        </MenuBar>
        <Toolbar>
          <Identity>
            <Avatar />
            <StatusBox>
              <StatusSelect>
                <Drop label="Status" value="Available" dot />
              </StatusSelect>
              Status
            </StatusBox>
          </Identity>
          <Tools>
            {vmTools.map(([name, off, w]) => (
              <Tool key={name} disabled={off} $w={w}>
                <RoundIcon name={name} />
                {name}
              </Tool>
            ))}
          </Tools>
          <RightTools>
            {appTools.map(([name, w]) => (
              <Tool key={name} $w={w}>
                <ColorIcon name={name} />
                {name}
              </Tool>
            ))}
            <ToolRule />
            <Tool $w={30}>
              <ColorIcon name="Tags" />
              Tags
            </Tool>
            <Tool $w={28}>
              <RoundIcon name="Log out" />
              Log out
            </Tool>
          </RightTools>
        </Toolbar>
        <Body>
          <SidePanel />
          <Main>
            <TagRow>
              <input type="text" aria-label="Tags" placeholder="Enter coma separated tags" />
              <TagButton aria-label="Edit tags">
                <svg width="7" height="9" viewBox="0 0 7 9" fill="none" stroke="#666" strokeWidth=".9">
                  <path d="M.8 2.500h5.400v5.700H.8z" />
                  <path d="M2.300 2.500V.900h2.400v1.600" strokeWidth=".8" />
                </svg>
              </TagButton>
            </TagRow>
            <Tabs>
              {modules.map((m) => (
                <Tab key={m} $active={m === "Definition"}>{m}</Tab>
              ))}
            </Tabs>
            <PageHead>
              <h1>Virtual machine properties</h1>
              <TypeRow>
                <Drop label="Virtual machine type" value="hvm (x86_64)" width={95} />
              </TypeRow>
            </PageHead>
            <Tabs $centered>
              {pages.map((m) => (
                <Tab key={m} $active={m === "Basics"}>{m}</Tab>
              ))}
            </Tabs>
            <Workspace>
              <Section>
                <h2>Basic settings</h2>
                <p>Configure basics behaviours of the virtual machine</p>
                <Fields>
                  <Label htmlFor="memory">Memory:</Label>
                  <WithUnit>
                    <TextInput id="memory" defaultValue="1024" />
                    MB
                  </WithUnit>
                  <Label htmlFor="cpus">Virtual CPUs:</Label>
                  <Stepper>
                    <TextInput id="cpus" defaultValue="1" />
                    <StepButtons>
                      <button aria-label="More">
                        <svg width="3" height="2" viewBox="0 0 3 2"><path d="M1.500 0 3 2H0z" /></svg>
                      </button>
                      <button aria-label="Less">
                        <svg width="3" height="2" viewBox="0 0 3 2"><path d="M1.500 2 3 0H0z" /></svg>
                      </button>
                    </StepButtons>
                  </Stepper>
                  <SelectField id="boot" label="Boot from" value="cdrom" />
                </Fields>
              </Section>
              <Section $inset={4}>
                <h2>Life cycle</h2>
                <p>Set the lifecycle of the virtual machines</p>
                <Fields>
                  <SelectField id="poweroff" label="On power off" value="destroy" />
                  <SelectField id="reboot" label="On reboot" value="restart" />
                  <SelectField id="crash" label="On crash" value="restart" />
                </Fields>
              </Section>
              <Section $inset={4}>
                <h2>Advanced features</h2>
                <p>Configure advanced features of virtual machine</p>
                <Fields $label={44}>
                  {switches.map(([name, on, locked]) => (
                    <React.Fragment key={name}>
                      <Label htmlFor={name}>{name}:</Label>
                      <Switch $on={on} $locked={locked}>
                        <input id={name} type="checkbox" defaultChecked={on} disabled={locked} />
                        <span>{on ? "On" : "Off"}</span>
                      </Switch>
                    </React.Fragment>
                  ))}
                  <SelectField id="clock" label="Clock" value="utc" />
                </Fields>
              </Section>
              <Section $indent={4} $inset={2}>
                <h2>Hypervisor management</h2>
                <p>Set how the hypervisor manages this virtual machine</p>
                <Fields>
                  <SelectField id="domain" label="Domain type" value="kvm" />
                  <SelectField id="machine" label="Machine" value="pc-0.13" />
                </Fields>
              </Section>
              <Section>
                <h2>Graphic devices</h2>
                <p>Set the graphic devices you want for this virtual machine</p>
                <DeviceList
                  title="Graphics"
                  keys={33}
                  rows={[["Keymap", "en-us"], ["Password", "Not protected"], ["Listen", "any"]]}
                />
              </Section>
              <Section $inset={2}>
                <h2>Input devices</h2>
                <p>Set the input devices you want for this virtual machine</p>
                <DeviceList title="Devices" keys={20} rows={[["Type", "tablet"], ["Bus", "usb"]]}>
                  <ListAction aria-label="Add a new input device"><Plus color="#111" /></ListAction>
                  <ListAction aria-label="Remove input device"><Minus color="#111" /></ListAction>
                  <ListAction aria-label="Edit input device">
                    <svg width="8" height="8" viewBox="0 0 8 8" fill="#222">
                      <path d="m6 .3 1.600 1.300L3.700 5.800 1.500 6.500 2.200 4.200zM.5 7.200H5v.7H.5z" />
                    </svg>
                  </ListAction>
                </DeviceList>
                <Tooltip role="tooltip">Add a new input device</Tooltip>
                <InputPopover />
              </Section>
            </Workspace>
            <Spacer />
            <Commands>
              <Advanced>
                Advanced controls:
                <IconButton aria-label="Edit XML">
                  <svg width="10" height="9" viewBox="0 0 10 9" fill="none" stroke="#333">
                    <path d="M3 2 .800 4.200 3 6.400" />
                    <circle cx="6.500" cy="5" r="2.300" />
                    <path d="m5.500 5.500 3-4M5.500 5h2" />
                  </svg>
                </IconButton>
                <IconButton aria-label="Undo changes">
                  <svg width="9" height="10" viewBox="0 0 9 10" fill="none" stroke="#333" strokeWidth=".9">
                    <path d="M4 9H1V.700h4L6.800 2.500V4M4.800.700v2h2" />
                    <circle cx="6.300" cy="7" r="1.800" />
                    <path d="M6.300 7 5 5.500" />
                  </svg>
                </IconButton>
              </Advanced>
              <PushButton $primary $w={44}>Validate</PushButton>
            </Commands>
          </Main>
        </Body>
        <Footer>
          <span>Connected as admin@ramucho</span>
          <span>Archipel Beta 3 (Mars) – Copyright 2011 Antoine Mercadal</span>
        </Footer>
      </Window>
    </Desktop>
  );
}
